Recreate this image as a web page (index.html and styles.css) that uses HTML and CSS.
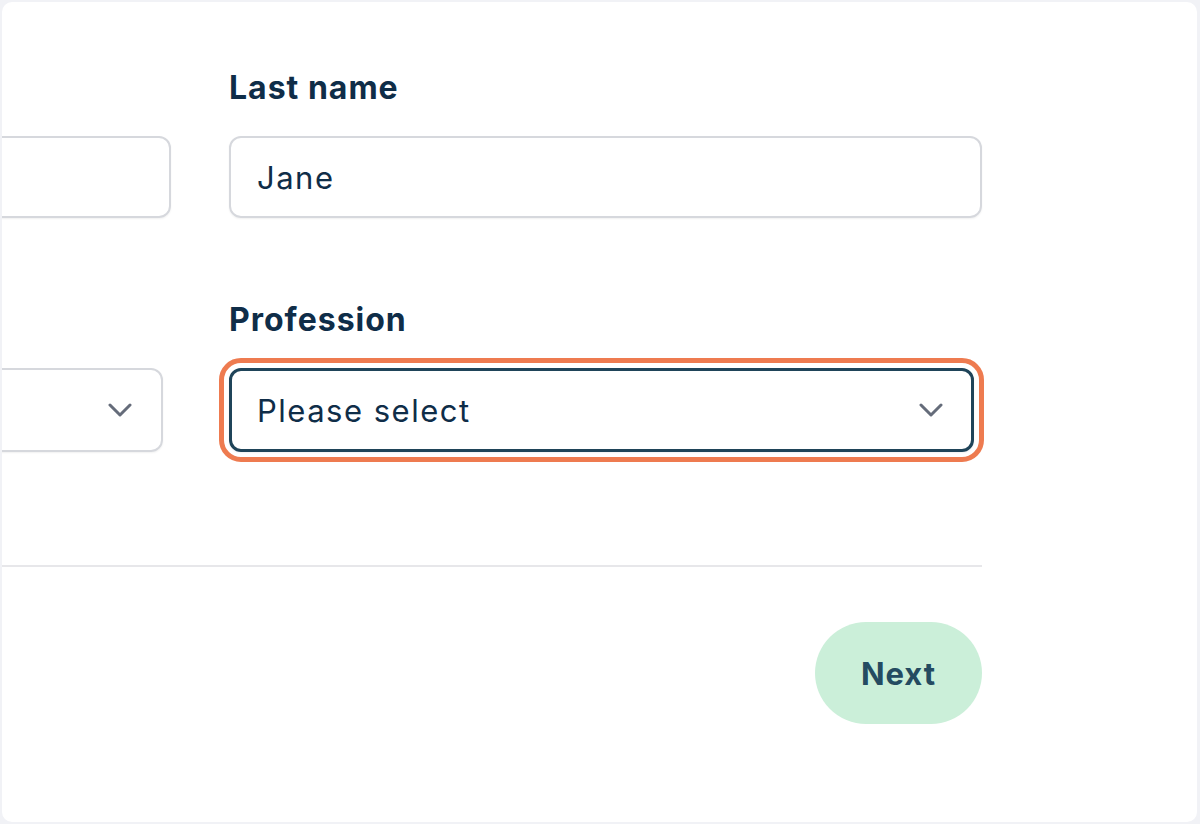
FILE: index.html
```html
<!DOCTYPE html>
<html lang="en">
<head>
    <meta charset="UTF-8">
    <meta name="viewport" content="width=device-width, initial-scale=1.0">
    <title>Your details</title>
    <link rel="stylesheet" href="styles.css">
</head>
<body>

    <div class="card">
        <form class="details-form">
            <div class="fields">
                <!-- first name (label sits outside the visible area) -->
                <div class="field">
                    <label class="field-label" for="firstName"></label>
                    <div class="text-box" id="firstName"></div>
                </div>

                <!-- last name -->
                <div class="field">
                    <label class="field-label" for="lastName">Last name</label>
                    <div class="text-box" id="lastName">Jane</div>
                </div>

                <!-- country -->
                <div class="field">
                    <label class="field-label" for="country"></label>
                    <div class="select-box" id="country">
                        <span></span>
                        <svg class="chevron" width="24" height="14" viewBox="0 0 24 14"><path d="M2 2l10 10 10-10" fill="none" stroke="currentColor" stroke-width="3" stroke-linecap="round" stroke-linejoin="round"/></svg>
                    </div>
                </div>

                <!-- profession -->
                <div class="field">
                    <label class="field-label" for="profession">Profession</label>
                    <div class="select-box is-focused" id="profession">
                        <span>Please select</span>
                        <svg class="chevron" width="24" height="14" viewBox="0 0 24 14"><path d="M2 2l10 10 10-10" fill="none" stroke="currentColor" stroke-width="3" stroke-linecap="round" stroke-linejoin="round"/></svg>
                    </div>
                </div>
            </div>

            <div class="form-footer">
                <button type="button" class="next-btn">Next</button>
            </div>
        </form>
    </div>

</body>
</html>
```

FILE: styles.css
```css
body {
    margin: 0;
    padding: 2px 3px 2px 2px;
    background-color: #f1f2f6;
    font-family: Inter, "Noto Sans", sans-serif;
    color: #0f2d48;
}

.card {
    height: 820px;
    background-color: #fff;
    border-radius: 10px;
    overflow: hidden;
}

/* the form is wider than the card, the first column runs off the left side */
.details-form {
    width: 1564px;
    margin-left: -584px;
    padding-top: 64px;
}

.fields {
    display: grid;
    grid-template-columns: 753px 753px;
    column-gap: 58px;
    row-gap: 80px;
}

.field-label {
    display: block;
    min-height: 44px;
    font-size: 32px;
    font-weight: 700;
    line-height: 44px;
    margin-bottom: 26px;
    letter-spacing: 1px;
}

.text-box {
    height: 78px;
    border: 2px solid #d6d8dd;
    border-radius: 12px;
    box-shadow: 0 1px 2px rgba(0, 0, 0, 0.06);
    padding: 0 26px;
    display: flex;
    align-items: center;
    font-size: 31px;
    letter-spacing: 1.5px;
}

.select-box {
    box-sizing: border-box;
    width: 745px;
    height: 84px;
    border: 2px solid #d6d8dd;
    border-radius: 12px;
    box-shadow: 0 1px 2px rgba(0, 0, 0, 0.06);
    padding: 0 29px 0 26px;
    display: flex;
    align-items: center;
    justify-content: space-between;
    font-size: 31px;
    letter-spacing: 1.5px;
}

.select-box.is-focused {
    border: 3px solid #1f4459;
    padding-left: 25px;
    padding-right: 28px;
    outline: 5px solid #ee7b50;
    outline-offset: 5px;
}

.chevron {
    color: #656c7a;
}

.form-footer {
    margin-top: 113px;
    border-top: 2px solid #e7e7ea;
    padding-top: 55px;
    display: flex;
    justify-content: flex-end;
}

.next-btn {
    width: 167px;
    height: 102px;
    border: none;
    border-radius: 51px;
    background-color: #cbefd9;
    color: #244b61;
    font-family: Inter, "Noto Sans", sans-serif;
    font-size: 31px;
    font-weight: 700;
    letter-spacing: 1px;
    cursor: pointer;
}
```
